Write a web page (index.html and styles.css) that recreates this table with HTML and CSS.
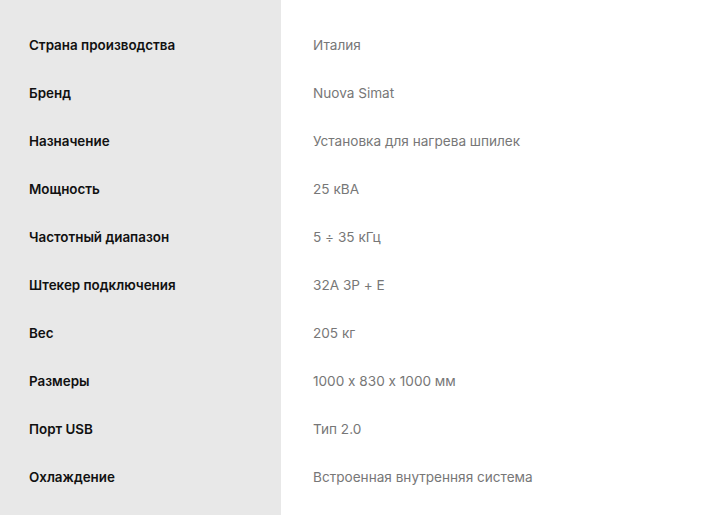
FILE: index.html
```html
<!DOCTYPE html>
<html lang="ru">
<head>
<meta charset="utf-8">
<link rel="stylesheet" href="styles.css">
</head>
<body>
<div class="specs">
  <div class="label">Страна производства</div><div class="value">Италия</div>
  <div class="label">Бренд</div><div class="value">Nuova Simat</div>
  <div class="label">Назначение</div><div class="value">Установка для нагрева шпилек</div>
  <div class="label">Мощность</div><div class="value">25 кВА</div>
  <div class="label">Частотный диапазон</div><div class="value">5 ÷ 35 кГц</div>
  <div class="label">Штекер подключения</div><div class="value">32A 3P + E</div>
  <div class="label">Вес</div><div class="value">205 кг</div>
  <div class="label">Размеры</div><div class="value">1000 x 830 x 1000 мм</div>
  <div class="label">Порт USB</div><div class="value">Тип 2.0</div>
  <div class="label">Охлаждение</div><div class="value">Встроенная внутренняя система</div>
</div>
</body>
</html>
```
FILE: styles.css
```css
html, body {
  margin: 0;
  padding: 0;
  background: #ffffff;
  height: 100%;
  overflow: hidden;
}
.specs {
  display: grid;
  grid-template-columns: 281px 1fr;
  grid-auto-rows: 48px;
  align-content: start;
  min-height: 100%;
  background: linear-gradient(to right, #e8e8e8 0, #e8e8e8 281px, #ffffff 281px);
  padding-top: 21px;
  box-sizing: border-box;
  font-family: Inter, "Noto Sans", sans-serif;
  font-size: 13.4px;
  font-feature-settings: "calt" 0;
}
.label {
  display: flex;
  align-items: center;
  padding-left: 29px;
  font-weight: 600;
  color: #111111;
}
.value {
  display: flex;
  align-items: center;
  padding-left: 32px;
  color: #777777;
  font-size: 13.6px;
}
```
